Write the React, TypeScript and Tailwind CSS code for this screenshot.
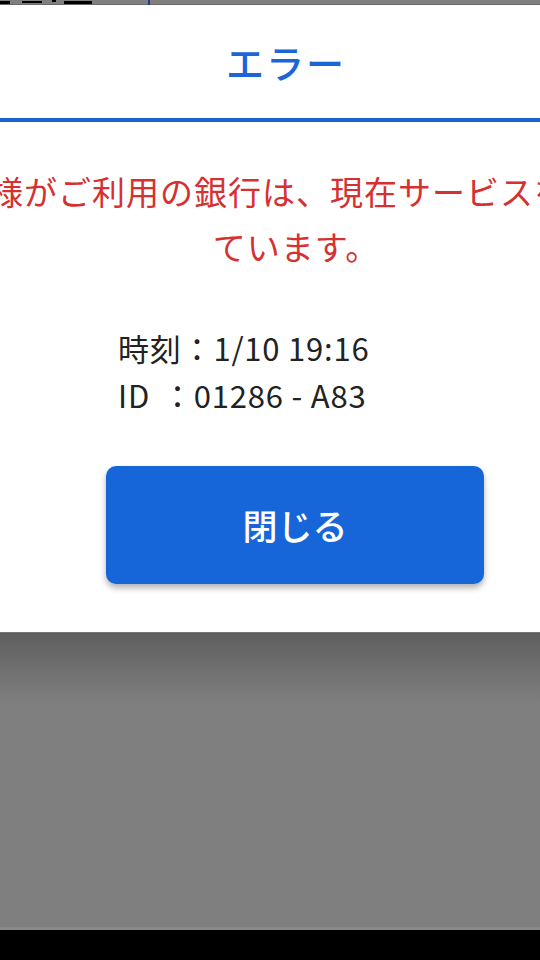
import React from 'react';

const jp = "font-['Noto_Sans_CJK_JP','Noto_Sans',sans-serif]";

// 背面画面の上端（ダイアログの裏に少しだけ見える部分）
const TopStrip: React.FC = () => (
  <div className="flex h-[5px] shrink-0 items-start bg-[#7f7f7f] border-b border-[#6a6a6a]">
    <div className="mt-[1px] h-[3px] w-[10px] bg-black" />
    <div className="ml-[12px] mt-[1px] h-[2px] w-[20px] bg-black" />
    <div className="ml-[10px] h-[2px] w-[4px] bg-black" />
    <div className="ml-[8px] mt-[1px] h-[3px] w-[28px] bg-black" />
    <div className="ml-[56px] h-[5px] w-[2px] bg-[#1f3f8a]" />
  </div>
);

const ErrorDialog: React.FC = () => (
  <div className="h-[627px] shrink-0 overflow-hidden bg-white">
    <div className={`ml-[-117px] flex w-[820px] flex-col ${jp}`}>
      {/* タイトル */}
      <div className="flex h-[117px] items-center justify-center border-b-4 border-[#1a64d2] pr-[14px]">
        <span className="text-[38px] font-medium tracking-[2px] text-[#1a66d6]">エラー</span>
      </div>

      {/* メッセージ */}
      <p className="mt-[42px] whitespace-nowrap pl-[6px] text-center text-[33px] leading-[55px] tracking-[1px] text-[#d63030]">
        お客様がご利用の銀行は、現在サービスを停止し
        <br />
        ています。
      </p>

      {/* 詳細 */}
      <div className="ml-[235px] mt-[50px] text-[31px] leading-[47px] tracking-[0.8px] text-[#222222]">
        <div>時刻：1/10 19:16</div>
        <div>
          <span className="inline-block w-[44px]">ID</span>：01286 - A83
        </div>
      </div>

      {/* 閉じるボタン */}
      <button className="ml-[223px] mt-[48px] flex h-[118px] w-[378px] items-center justify-center rounded-[10px] bg-[#1766d9] text-[35px] font-medium text-white shadow-[0_4px_6px_rgba(0,0,0,0.3)]">
        閉じる
      </button>
    </div>
  </div>
);

const App: React.FC = () => {
  return (
    <div className="flex h-[960px] w-[540px] flex-col overflow-hidden bg-[#7f7f7f]">
      <TopStrip />
      <ErrorDialog />
      <div className="flex flex-1 flex-col border-t border-[#777777] bg-[linear-gradient(to_bottom,#5f5f5f_0px,#7f7f7f_70px)]">
        <div className="flex-1" />
        <div className="h-[3px] bg-[#8a8a8a]" />
      </div>
      <div className="h-[30px] shrink-0 bg-black" />
    </div>
  );
};

export default App;
